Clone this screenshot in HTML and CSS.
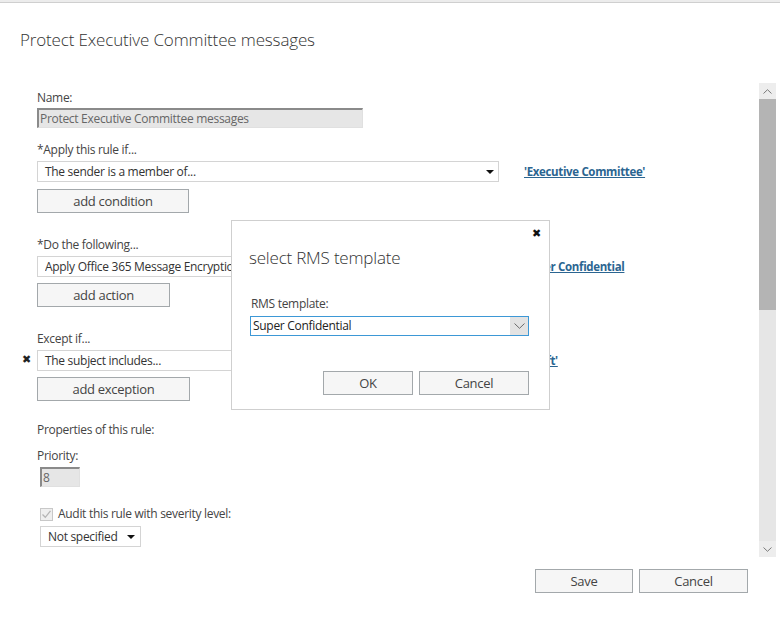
FILE: index.html
```html
<!DOCTYPE html>
<html>
<head>
<meta charset="utf-8">
<link rel="stylesheet" href="styles.css">
</head>
<body>
<div class="page">
  <div class="topbar"></div>
  <h1 class="title">Protect Executive Committee messages</h1>
  <div class="scroll-area">
    <div class="content">
      <div class="label first">Name:</div>
      <div class="textbox name">Protect Executive Committee messages</div>

      <div class="label l-apply">*Apply this rule if...</div>
      <div class="row">
        <div class="select wide"><span>The sender is a member of...</span><span class="tri"></span></div>
        <a class="link">'Executive Committee'</a>
      </div>
      <div class="btn b-cond">add condition</div>

      <div class="label l-do">*Do the following...</div>
      <div class="row">
        <div class="select wide"><span class="clip">Apply Office 365 Message Encryption and rights protection</span><span class="tri"></span></div>
        <a class="link">Super Confidential</a>
      </div>
      <div class="btn b-act">add action</div>

      <div class="label l-exc">Except if...</div>
      <div class="row">
        <span class="remove">&#x2716;</span>
        <div class="select wide"><span>The subject includes...</span><span class="tri"></span></div>
        <a class="link">'Draft'</a>
      </div>
      <div class="btn b-exc">add exception</div>

      <div class="label l-prop">Properties of this rule:</div>
      <div class="label l-prio">Priority:</div>
      <div class="textbox prio">8</div>
      <div class="check-row">
        <span class="checkbox"><svg width="11" height="11" viewBox="0 0 11 11"><path d="M1.5 5.5 L4.3 8.3 L9.5 1.8" fill="none" stroke="#b5b5b5" stroke-width="1.3"/></svg></span>
        <span class="label">Audit this rule with severity level:</span>
      </div>
      <div class="select small"><span>Not specified</span><span class="tri"></span></div>
    </div>
    <div class="scrollbar">
      <div class="sb-btn"><svg width="9" height="5" viewBox="0 0 9 5"><path d="M0.5 4.5 L4.5 0.7 L8.5 4.5" fill="none" stroke="#7a7a7a" stroke-width="1"/></svg></div>
      <div class="sb-thumb"></div>
      <div class="sb-track"></div>
      <div class="sb-btn"><svg width="9" height="5" viewBox="0 0 9 5"><path d="M0.5 0.5 L4.5 4.3 L8.5 0.5" fill="none" stroke="#7a7a7a" stroke-width="1"/></svg></div>
    </div>
  </div>
  <div class="footer">
    <div class="btn b-save">Save</div>
    <div class="btn b-cancel">Cancel</div>
  </div>

  <div class="dialog">
    <span class="close">&#x2716;</span>
    <div class="d-title">select RMS template</div>
    <div class="label d-label">RMS template:</div>
    <div class="d-select"><span>Super Confidential</span><span class="d-arrow"><svg width="11" height="6" viewBox="0 0 11 6"><path d="M0.5 0.5 L5.5 5.3 L10.5 0.5" fill="none" stroke="#6a6a6a" stroke-width="1"/></svg></span></div>
    <div class="d-buttons">
      <div class="btn b-ok">OK</div>
      <div class="btn b-dcancel">Cancel</div>
    </div>
  </div>
</div>
</body>
</html>
```
FILE: styles.css
```css
* { box-sizing: border-box; }
html, body { margin: 0; padding: 0; background: #fff; }
body {
  font-family: "Open Sans", "Noto Sans", sans-serif;
  font-size: 12px;
  letter-spacing: -0.3px;
  color: #444;
}
.page {
  position: relative;
  width: 780px;
  height: 627px;
  overflow: hidden;
}
.topbar {
  height: 3px;
  background: #ececec;
  border-bottom: 1px solid #cfcfcf;
}
.title {
  margin: 25px 0 0 20px;
  height: 55px;
  font-weight: 300;
  font-size: 17px;
  letter-spacing: -0.15px;
  line-height: 24px;
  color: #333;
}
.scroll-area {
  display: flex;
  height: 474px;
}
.content {
  flex: 1;
  padding: 7px 0 0 37px;
  position: relative;
}
.label {
  line-height: 16px;
  color: #444;
  white-space: nowrap;
}
.textbox {
  background: #e6e6e6;
  border-top: 2px solid #8a8a8a;
  border-left: 2px solid #8a8a8a;
  border-right: 1px solid #e0e0e0;
  border-bottom: 1px solid #e0e0e0;
  color: #666;
  line-height: 17px;
  padding-left: 1px;
  white-space: nowrap;
}
.textbox.name { margin-top: 2px; width: 326px; height: 20px; }
.l-apply { margin-top: 14px; }
.row {
  display: flex;
  align-items: center;
  margin-top: 3px;
  position: relative;
}
.select {
  display: flex;
  align-items: center;
  justify-content: space-between;
  border: 1px solid #d4d4d4;
  background: #fff;
  color: #333;
  white-space: nowrap;
  overflow: hidden;
}
.select .clip {
  display: block;
  width: 187px;
  overflow: hidden;
}
.select.wide { width: 462px; height: 21px; padding: 0 4px 0 7px; }
.select.small { width: 101px; height: 21px; padding: 0 5px 0 7px; margin: 4px 0 0 3px; }
.tri {
  flex: none;
  width: 0; height: 0;
  border-left: 4px solid transparent;
  border-right: 4px solid transparent;
  border-top: 4px solid #111;
  margin-left: 6px;
}
.link {
  margin-left: 25px;
  font-weight: 700;
  font-size: 11.5px;
  letter-spacing: -0.35px;
  color: #2b6591;
  text-decoration: underline;
  white-space: nowrap;
}
.remove {
  position: absolute;
  left: -15px;
  top: 3px;
  font-size: 11px;
  line-height: 12px;
  color: #222;
}
.btn {
  height: 24px;
  border: 1px solid #a3a8ab;
  background: #f6f6f6;
  color: #444;
  font-size: 13px;
  letter-spacing: -0.3px;
  line-height: 22px;
  text-align: center;
}
.b-cond { width: 152px; margin-top: 7px; }
.b-act { width: 133px; margin-top: 6px; }
.b-exc { width: 153px; margin-top: 6px; }
.l-do { margin-top: 24px; }
.l-exc { margin-top: 24px; }
.l-prop { margin-top: 21px; }
.l-prio { margin-top: 10px; }
.textbox.prio { width: 40px; height: 20px; margin: 3px 0 0 3px; }
.check-row {
  display: flex;
  align-items: center;
  margin: 19px 0 0 3px;
  height: 16px;
}
.checkbox {
  width: 13px; height: 13px;
  border: 1px solid #c8c8c8;
  background: #efefef;
  display: flex; align-items: center; justify-content: center;
  margin-right: 5px;
}
.scrollbar {
  width: 17px;
  margin-right: 4px;
  display: flex;
  flex-direction: column;
  background: #e6e6e6;
}
.sb-btn {
  height: 16px;
  background: #ededed;
  display: flex; align-items: center; justify-content: center;
}
.sb-thumb { height: 211px; background: #b4b4b4; }
.sb-track { flex: 1; }
.footer {
  display: flex;
  justify-content: flex-end;
  gap: 6px;
  padding: 12px 32px 0 0;
}
.b-save { width: 98px; }
.b-cancel { width: 109px; }

.dialog {
  position: absolute;
  left: 231px;
  top: 220px;
  width: 319px;
  height: 190px;
  background: #fff;
  border: 1px solid #cfcfcf;
  padding: 0 0 0 17px;
}
.close {
  position: absolute;
  right: 8px;
  top: 6px;
  font-size: 11px;
  line-height: 12px;
  color: #111;
}
.d-title {
  margin-top: 25px;
  font-size: 17px;
  font-weight: 300;
  letter-spacing: -0.2px;
  line-height: 24px;
  color: #333;
}
.d-label { margin-top: 26px; margin-left: 2px; }
.d-select {
  margin-top: 4px;
  margin-left: 1px;
  width: 279px;
  height: 20px;
  border: 1px solid #3d98d6;
  display: flex;
  justify-content: space-between;
  align-items: stretch;
  color: #222;
}
.d-select span:first-child { line-height: 18px; padding-left: 2px; }
.d-arrow {
  width: 18px;
  background: #e3e3e3;
  display: flex; align-items: center; justify-content: center;
}
.d-buttons {
  display: flex;
  gap: 6px;
  margin: 35px 0 0 74px;
}
.b-ok { width: 90px; }
.b-dcancel { width: 110px; }
```
